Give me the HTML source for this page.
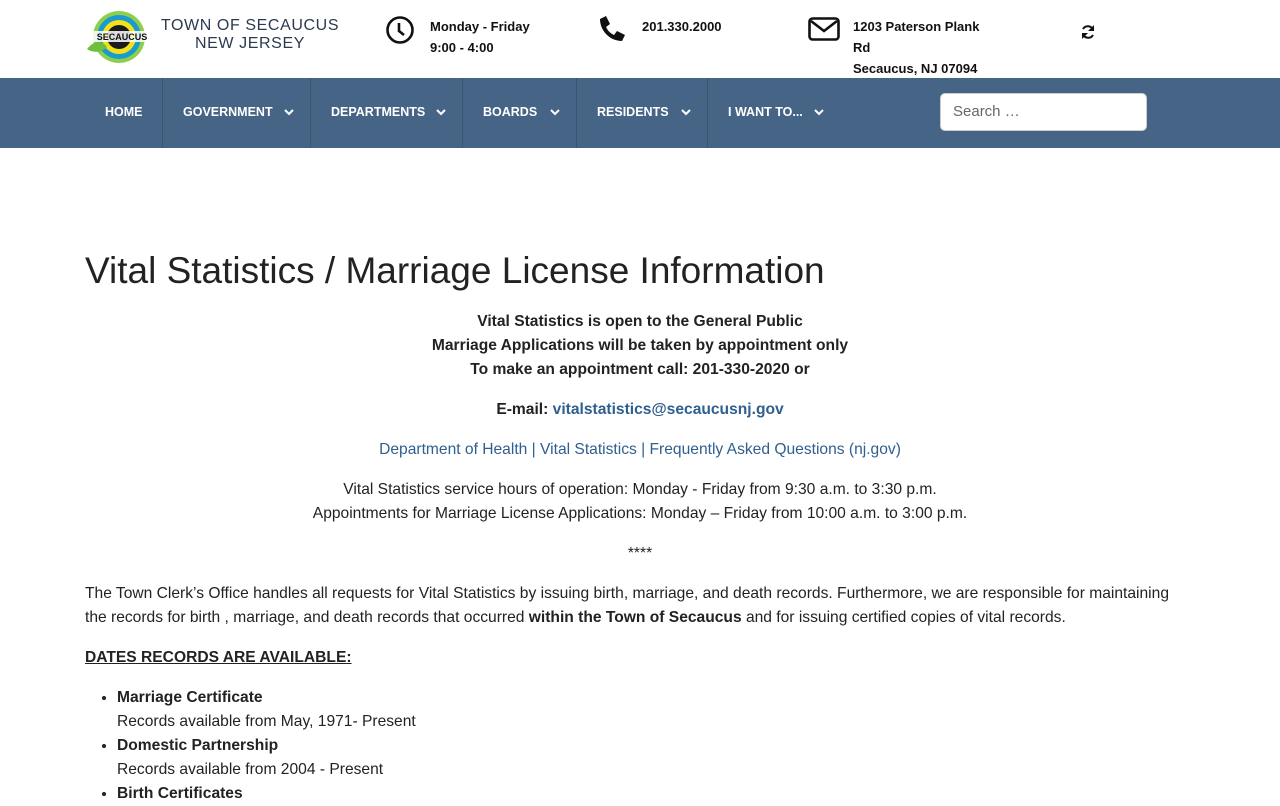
<!DOCTYPE html>
<html><head><meta charset="utf-8"><style>
*{margin:0;padding:0;box-sizing:border-box}
body{width:1280px;height:800px;overflow:hidden;background:#fff;font-family:"Liberation Sans",sans-serif;color:#222}
.top{height:78px;position:relative}
.logo{position:absolute;left:85px;top:9px}
.lt{position:absolute;left:160px;top:17px;font-family:"Liberation Sans",sans-serif;color:#2b3a4f;font-size:16px;letter-spacing:.6px;text-align:center;line-height:18px;width:180px;white-space:nowrap}
.info{position:absolute;font-size:13px;font-weight:bold;line-height:21px;color:#111}
nav{position:absolute;top:78px;left:0;width:1280px;height:70px;background:#466586}
nav .it{position:absolute;top:0;height:70px;line-height:68px;color:#fff;font-size:12.5px;font-weight:bold;border-right:1px solid #3a5571}
nav .it svg{position:absolute;top:30px}
.search{position:absolute;left:940px;top:15px;width:207px;height:38px;background:#fff;border:1px solid #ccc;border-radius:5px;font-size:15px;color:#666;padding:9px 12px}
h1{position:absolute;left:85px;top:250px;font-size:37px;font-weight:normal;color:#222}
.c{position:absolute;left:85px;width:1110px;text-align:center;font-size:15.6px;line-height:24px}
a{color:#2f5f8e;text-decoration:none}
.p{position:absolute;left:85px;width:1100px;font-size:15.6px;line-height:24px}
ul{list-style:disc;padding-left:32px}
</style></head><body>
<div class="top">
<svg class="logo" width="70" height="56" viewBox="0 0 70 56">
<circle cx="34" cy="28" r="26" fill="#8ccf4a"/><circle cx="34" cy="28" r="22" fill="#1a9ad0"/><circle cx="34" cy="28" r="17" fill="#f3e21a"/><circle cx="34" cy="28" r="12" fill="#1b1b1b"/>
<path d="M2 40c8-10 16-8 20-2-6 6-14 6-20 2z" fill="#6fbf3c"/>
<rect x="8" y="22" width="58" height="11" fill="#fff" opacity=".85"/>
<text x="37" y="31" font-size="9" font-weight="bold" text-anchor="middle" fill="#111" font-family="Liberation Sans">SECAUCUS</text></svg>
<div class="lt">TOWN OF SECAUCUS<br>NEW JERSEY</div>
<svg style="position:absolute;left:385px;top:15px" width="30" height="30" viewBox="0 0 30 30"><circle cx="15" cy="15" r="12.5" fill="none" stroke="#111" stroke-width="2.6"/><path d="M14 8v8l5 4" fill="none" stroke="#111" stroke-width="2.6"/></svg>
<div class="info" style="left:430px;top:16px">Monday - Friday<br>9:00 - 4:00</div>
<svg style="position:absolute;left:597px;top:14px" width="30" height="30" viewBox="0 0 30 30"><path d="M3 5l6-3 4 8-4 3c2 4 4 6 8 8l3-4 8 4-3 6C13 27 3 17 3 5z" fill="#111"/></svg>
<div class="info" style="left:642px;top:16px">201.330.2000</div>
<svg style="position:absolute;left:808px;top:17px" width="32" height="24" viewBox="0 0 32 24"><rect x="1.5" y="1.5" width="29" height="21" rx="3" fill="none" stroke="#111" stroke-width="2.6"/><path d="M3 4l13 10 13-10" fill="none" stroke="#111" stroke-width="2.6"/></svg>
<div class="info" style="left:853px;top:16px">1203 Paterson Plank<br>Rd<br>Secaucus, NJ 07094</div>
<svg style="position:absolute;left:1080px;top:24px" width="16" height="16" viewBox="0 0 16 16"><path d="M13 6A5.5 5.5 0 0 0 3 5M3 10a5.5 5.5 0 0 0 10 1" fill="none" stroke="#111" stroke-width="2"/><path d="M14 1v6H8zM2 15V9h6z" fill="#111"/></svg>
</div>
<nav>
<div class="it" style="left:85px;width:78px;padding-left:20px">HOME</div>
<div class="it" style="left:163px;width:148px;padding-left:20px">GOVERNMENT<svg style="left:121px" width="10" height="8" viewBox="0 0 10 8"><path d="M1 2l4 4 4-4" fill="none" stroke="#fff" stroke-width="2"/></svg></div>
<div class="it" style="left:311px;width:152px;padding-left:20px">DEPARTMENTS<svg style="left:125px" width="10" height="8" viewBox="0 0 10 8"><path d="M1 2l4 4 4-4" fill="none" stroke="#fff" stroke-width="2"/></svg></div>
<div class="it" style="left:463px;width:114px;padding-left:20px">BOARDS<svg style="left:87px" width="10" height="8" viewBox="0 0 10 8"><path d="M1 2l4 4 4-4" fill="none" stroke="#fff" stroke-width="2"/></svg></div>
<div class="it" style="left:577px;width:131px;padding-left:20px">RESIDENTS<svg style="left:104px" width="10" height="8" viewBox="0 0 10 8"><path d="M1 2l4 4 4-4" fill="none" stroke="#fff" stroke-width="2"/></svg></div>
<div class="it" style="left:708px;width:130px;padding-left:20px;border:none">I WANT TO...<svg style="left:106px" width="10" height="8" viewBox="0 0 10 8"><path d="M1 2l4 4 4-4" fill="none" stroke="#fff" stroke-width="2"/></svg></div>
<div class="search">Search …</div>
</nav>
<h1>Vital Statistics / Marriage License Information</h1>
<div class="c" style="top:310px;font-weight:bold">Vital Statistics is open to the General Public<br>Marriage Applications will be taken by appointment only<br>To make an appointment call: 201-330-2020 or</div>
<div class="c" style="top:398px;font-weight:bold">E-mail: <a href="#">vitalstatistics@secaucusnj.gov</a></div>
<div class="c" style="top:438px"><a href="#">Department of Health | Vital Statistics | Frequently Asked Questions (nj.gov)</a></div>
<div class="c" style="top:478px">Vital Statistics service hours of operation: Monday - Friday from 9:30 a.m. to 3:30 p.m.<br>Appointments for Marriage License Applications: Monday – Friday from 10:00 a.m. to 3:00 p.m.</div>
<div class="c" style="top:542px">****</div>
<div class="p" style="top:582px">The Town Clerk’s Office handles all requests for Vital Statistics by issuing birth, marriage, and death records. Furthermore, we are responsible for maintaining the records for birth , marriage, and death records that occurred <b>within the Town of Secaucus</b> and for issuing certified copies of vital records.</div>
<div class="p" style="top:646px;font-weight:bold;text-decoration:underline">DATES RECORDS ARE AVAILABLE:</div>
<div class="p" style="top:686px"><ul><li><b>Marriage Certificate</b><br>Records available from May, 1971- Present</li><li><b>Domestic Partnership</b><br>Records available from 2004 - Present</li><li><b>Birth Certificates</b></li></ul></div>
</body></html>
